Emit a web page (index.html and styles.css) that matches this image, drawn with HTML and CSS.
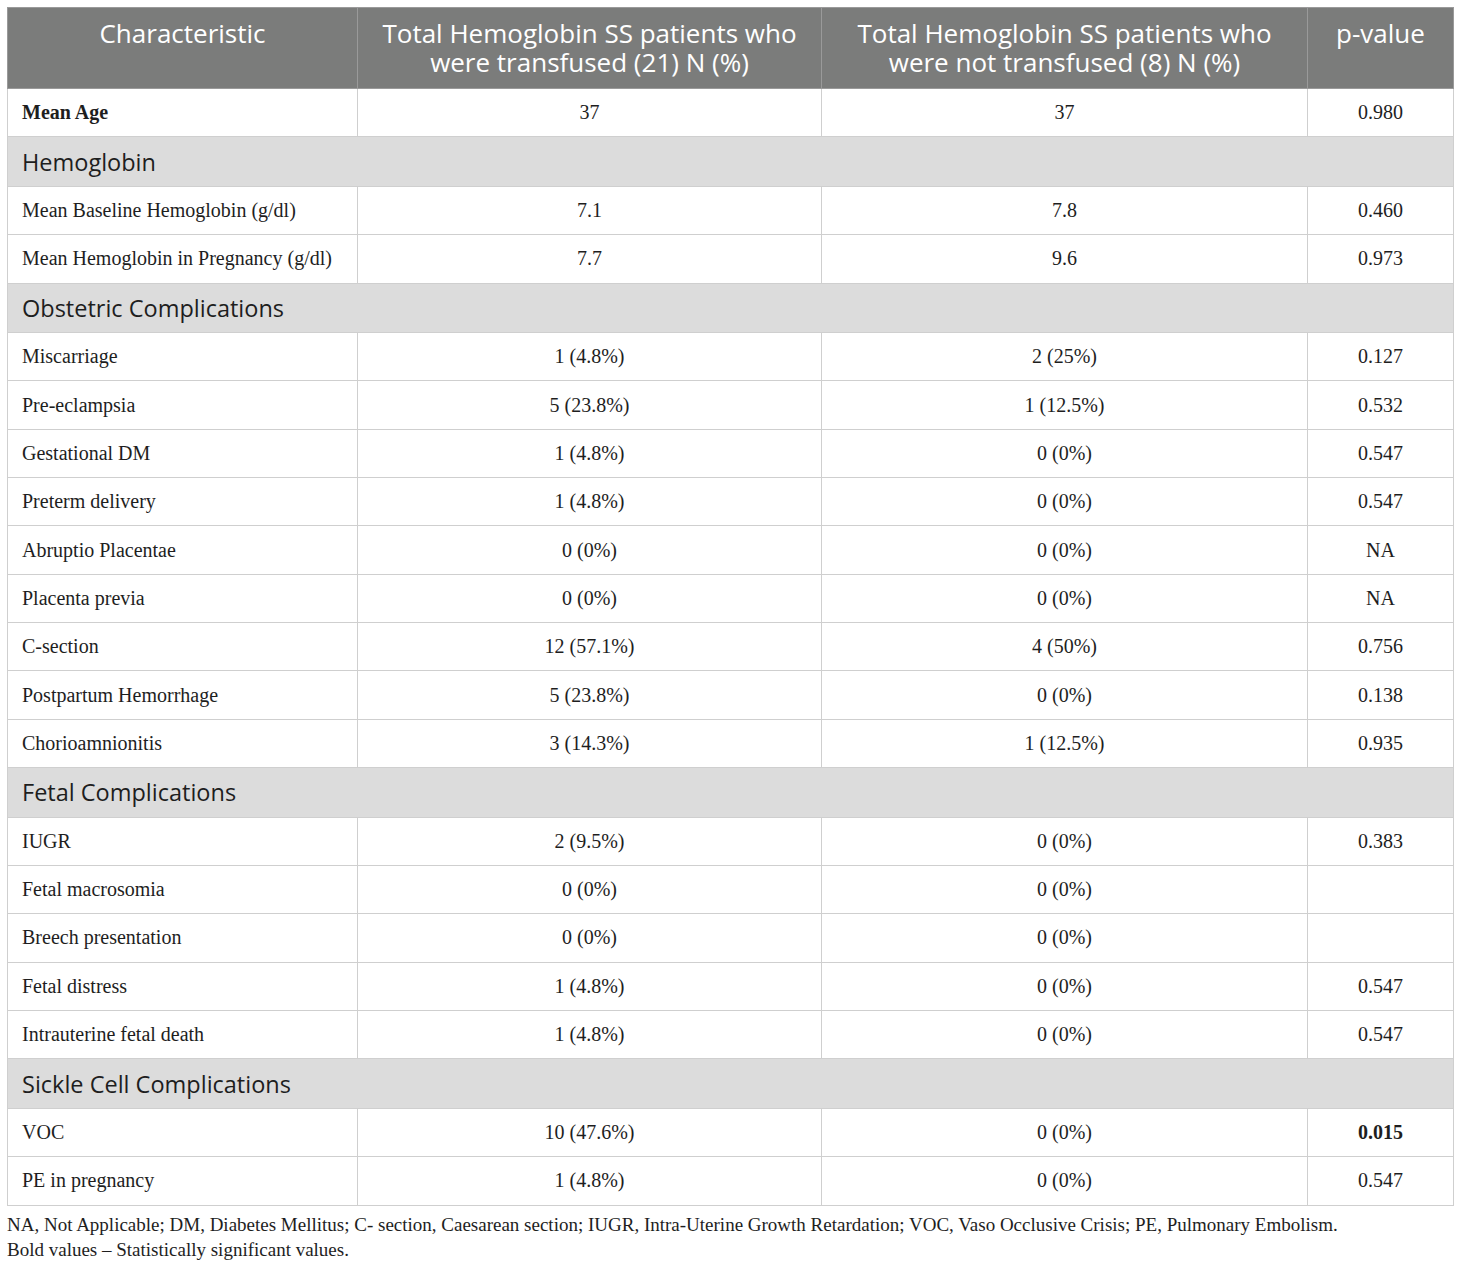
FILE: index.html
```html
<!DOCTYPE html>
<html>
<head>
<meta charset="utf-8">
<link rel="stylesheet" href="styles.css">
</head>
<body>
<div class="wrap">
<table class="tbl">
<colgroup>
<col class="c1"><col class="c2"><col class="c3"><col class="c4">
</colgroup>
<thead>
<tr>
<th>Characteristic</th>
<th><span class="hl">Total Hemoglobin SS patients who</span><span class="hl">were transfused (21) N (%)</span></th>
<th><span class="hl">Total Hemoglobin SS patients who</span><span class="hl">were not transfused (8) N (%)</span></th>
<th>p-value</th>
</tr>
</thead>
<tbody>
<tr><td class="lbl b">Mean Age</td><td>37</td><td>37</td><td>0.980</td></tr>
<tr class="sec"><td colspan="4">Hemoglobin</td></tr>
<tr><td class="lbl">Mean Baseline Hemoglobin (g/dl)</td><td>7.1</td><td>7.8</td><td>0.460</td></tr>
<tr><td class="lbl">Mean Hemoglobin in Pregnancy (g/dl)</td><td>7.7</td><td>9.6</td><td>0.973</td></tr>
<tr class="sec"><td colspan="4">Obstetric Complications</td></tr>
<tr><td class="lbl">Miscarriage</td><td>1 (4.8%)</td><td>2 (25%)</td><td>0.127</td></tr>
<tr><td class="lbl">Pre-eclampsia</td><td>5 (23.8%)</td><td>1 (12.5%)</td><td>0.532</td></tr>
<tr><td class="lbl">Gestational DM</td><td>1 (4.8%)</td><td>0 (0%)</td><td>0.547</td></tr>
<tr><td class="lbl">Preterm delivery</td><td>1 (4.8%)</td><td>0 (0%)</td><td>0.547</td></tr>
<tr><td class="lbl">Abruptio Placentae</td><td>0 (0%)</td><td>0 (0%)</td><td>NA</td></tr>
<tr><td class="lbl">Placenta previa</td><td>0 (0%)</td><td>0 (0%)</td><td>NA</td></tr>
<tr><td class="lbl">C-section</td><td>12 (57.1%)</td><td>4 (50%)</td><td>0.756</td></tr>
<tr><td class="lbl">Postpartum Hemorrhage</td><td>5 (23.8%)</td><td>0 (0%)</td><td>0.138</td></tr>
<tr><td class="lbl">Chorioamnionitis</td><td>3 (14.3%)</td><td>1 (12.5%)</td><td>0.935</td></tr>
<tr class="sec"><td colspan="4">Fetal Complications</td></tr>
<tr><td class="lbl">IUGR</td><td>2 (9.5%)</td><td>0 (0%)</td><td>0.383</td></tr>
<tr><td class="lbl">Fetal macrosomia</td><td>0 (0%)</td><td>0 (0%)</td><td></td></tr>
<tr><td class="lbl">Breech presentation</td><td>0 (0%)</td><td>0 (0%)</td><td></td></tr>
<tr><td class="lbl">Fetal distress</td><td>1 (4.8%)</td><td>0 (0%)</td><td>0.547</td></tr>
<tr><td class="lbl">Intrauterine fetal death</td><td>1 (4.8%)</td><td>0 (0%)</td><td>0.547</td></tr>
<tr class="sec"><td colspan="4">Sickle Cell Complications</td></tr>
<tr><td class="lbl">VOC</td><td>10 (47.6%)</td><td>0 (0%)</td><td class="b">0.015</td></tr>
<tr><td class="lbl">PE in pregnancy</td><td>1 (4.8%)</td><td>0 (0%)</td><td>0.547</td></tr>
</tbody>
</table>
<div class="notes">
<p>NA, Not Applicable; DM, Diabetes Mellitus; C- section, Caesarean section; IUGR, Intra-Uterine Growth Retardation; VOC, Vaso Occlusive Crisis; PE, Pulmonary Embolism.</p>
<p>Bold values – Statistically significant values.</p>
</div>
</div>
</body>
</html>
```
FILE: styles.css
```css
html, body {
  margin: 0;
  padding: 0;
  background: #ffffff;
}
.wrap {
  padding: 7px 7px 0 7px;
}
.tbl {
  width: 1446px;
  border-collapse: collapse;
  table-layout: fixed;
  font-family: "Liberation Serif", "Times New Roman", serif;
  font-size: 20px;
  color: #1e1e1e;
}
.c1 { width: 350px; }
.c2 { width: 464px; }
.c3 { width: 486px; }
.c4 { width: 146px; }
.tbl th {
  background: #7b7c7b;
  color: #fff;
  font-family: "Open Sans", "Noto Sans", sans-serif;
  font-weight: 400;
  font-size: 26px;
  line-height: 29px;
  height: 81px;
  padding: 11px 4px 0 4px;
  border: 1px solid #9a9a9a;
  box-sizing: border-box;
  text-align: center;
  vertical-align: top;
}
.tbl th .hl {
  display: block;
  height: 29px;
}
.tbl td {
  border: 1px solid #cfcfcf;
  height: 48.35px;
  padding: 0 14px;
  text-align: center;
  vertical-align: middle;
  box-sizing: border-box;
}
.tbl td.lbl {
  text-align: left;
}
.tbl .b {
  font-weight: 700;
}
.tbl tr.sec td {
  background: #dcdcdc;
  font-family: "Open Sans", "Noto Sans", sans-serif;
  font-size: 23.5px;
  text-align: left;
  height: 49.5px;
  color: #1e1e1e;
}
.notes {
  font-family: "Liberation Serif", "Times New Roman", serif;
  font-size: 19px;
  color: #1e1e1e;
  padding-top: 6px;
}
.notes p {
  margin: 0;
  line-height: 25px;
}
```
